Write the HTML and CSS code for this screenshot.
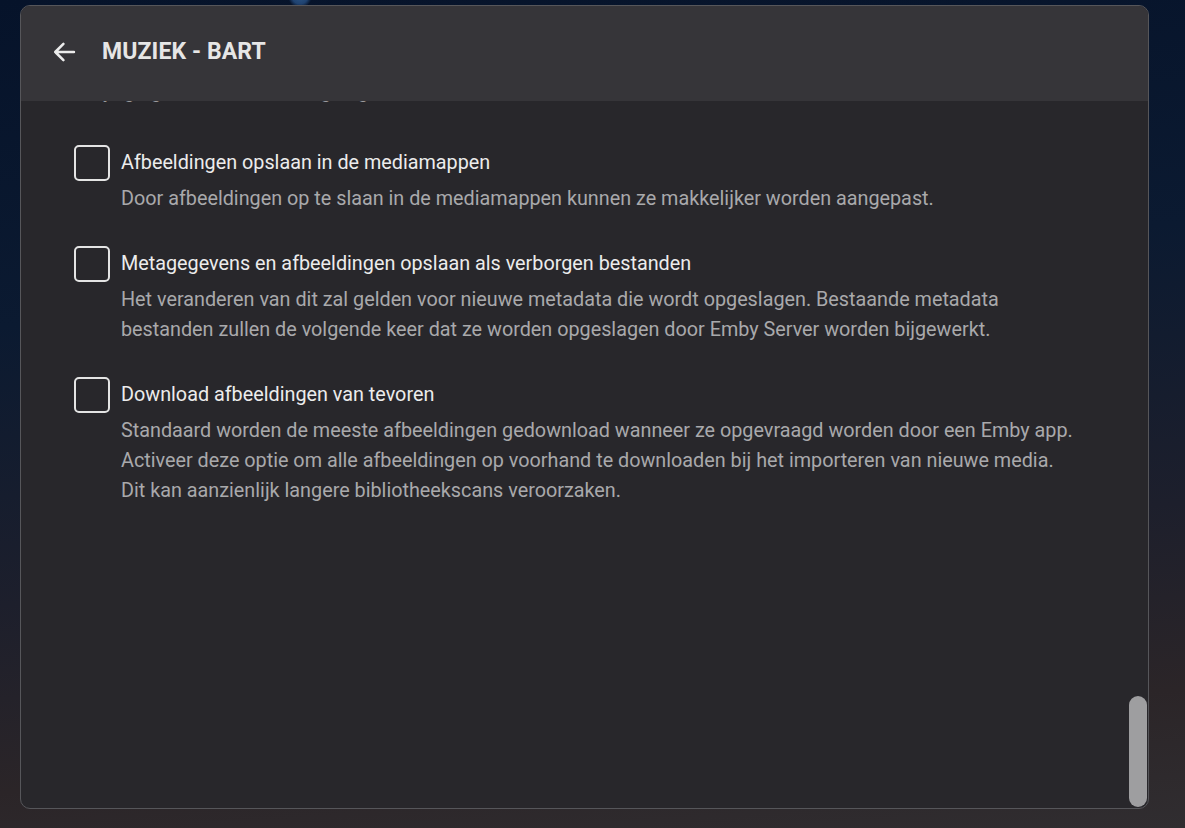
FILE: index.html
```html
<!DOCTYPE html>
<html lang="nl">
<head>
<meta charset="utf-8">
<title>Muziek - Bart</title>
<link rel="stylesheet" href="styles.css">
</head>
<body>
<div class="dialog">
  <header class="header">
    <button class="back" aria-label="Terug">
      <svg viewBox="0 0 24 24" width="28" height="28"><path d="M20.5 12H4.5M11.5 5l-7 7 7 7" fill="none" stroke="currentColor" stroke-width="2.2" stroke-linecap="round" stroke-linejoin="round"/></svg>
    </button>
    <h1 class="title">MUZIEK - BART</h1>
  </header>
  <div class="content">
    <p class="clipped">Wijzigingen aan de instellingen gelden voor nieuwe inhoud en bestaande scans.</p>
    <div class="option">
      <span class="box"></span>
      <div class="text">
        <div class="label">Afbeeldingen opslaan in de mediamappen</div>
        <div class="desc">Door afbeeldingen op te slaan in de mediamappen kunnen ze makkelijker worden aangepast.</div>
      </div>
    </div>
    <div class="option">
      <span class="box"></span>
      <div class="text">
        <div class="label">Metagegevens en afbeeldingen opslaan als verborgen bestanden</div>
        <div class="desc">Het veranderen van dit zal gelden voor nieuwe metadata die wordt opgeslagen. Bestaande metadata<br>bestanden zullen de volgende keer dat ze worden opgeslagen door Emby Server worden bijgewerkt.</div>
      </div>
    </div>
    <div class="option">
      <span class="box"></span>
      <div class="text">
        <div class="label">Download afbeeldingen van tevoren</div>
        <div class="desc">Standaard worden de meeste afbeeldingen gedownload wanneer ze opgevraagd worden door een Emby app.<br>Activeer deze optie om alle afbeeldingen op voorhand te downloaden bij het importeren van nieuwe media.<br>Dit kan aanzienlijk langere bibliotheekscans veroorzaken.</div>
      </div>
    </div>
  </div>
  <div class="thumb"></div>
</div>
</body>
</html>
```

FILE: styles.css
```css
html, body {
  height: 100%;
}
body {
  margin: 0;
  box-sizing: border-box;
  padding: 5px 36px 21px 20px;
  font-family: Roboto, "Noto Sans", "Liberation Sans", sans-serif;
  background:
    radial-gradient(circle at 300px -4px, #2d5686 0, #1f4270 8px, rgba(20,40,70,0) 12px),
    linear-gradient(175deg, #06132a 0%, #0b1a31 35%, #1d1f2c 65%, #2b2528 85%, #302d30 100%);
  overflow: hidden;
}
.dialog {
  position: relative;
  height: 100%;
  display: flex;
  flex-direction: column;
  background: #28272b;
  border: 1px solid #56565a;
  border-radius: 10px;
  overflow: hidden;
}
.header {
  flex: 0 0 95px;
  display: flex;
  align-items: center;
  padding: 0 0 4px 29px;
  box-sizing: border-box;
  background: #363539;
  position: relative;
  z-index: 1;
}
.back {
  width: 28px;
  height: 28px;
  padding: 0;
  margin: 0 24px 0 0;
  border: 0;
  background: none;
  color: #ececec;
  display: flex;
}
.title {
  margin: 0;
  font-size: 23px;
  font-weight: 700;
  color: #e6e6e6;
  letter-spacing: 0.1px;
}
.content {
  flex: 1;
  overflow: hidden;
  padding: 0 0 0 53px;
}
.clipped {
  margin: -24px 0 41px 8px;
  font-size: 19.8px;
  line-height: 30px;
  color: #9a9a9c;
  white-space: nowrap;
}
.option {
  display: flex;
  gap: 11px;
  margin-bottom: 35px;
}
.box {
  flex: 0 0 auto;
  box-sizing: border-box;
  width: 36px;
  height: 36px;
  margin-top: -3px;
  border: 2.5px solid #e4e4e4;
  border-radius: 5px;
}
.label {
  font-size: 19.8px;
  line-height: 30px;
  color: #ececec;
  margin-bottom: 6px;
}
.desc {
  font-size: 19.8px;
  line-height: 30px;
  color: #a9a9ab;
}
.thumb {
  position: absolute;
  right: 1px;
  bottom: 1px;
  width: 18px;
  height: 111px;
  border-radius: 9px;
  background: #9e9ea0;
}
```
